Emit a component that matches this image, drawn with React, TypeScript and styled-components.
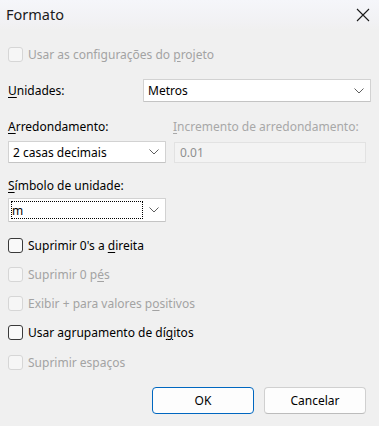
import React from "react";
import styled, { createGlobalStyle } from "styled-components";

const Global = createGlobalStyle`
  html, body { margin: 0; padding: 0; }
  body {
    width: 379px;
    height: 426px;
    overflow: hidden;
    background: #f0f0f0;
    font-family: "Noto Sans", "Open Sans", sans-serif;
    font-size: 12px;
    color: #000;
  }
`;

const Dialog = styled.div`
  width: 379px;
  height: 426px;
  display: flex;
  flex-direction: column;
  background: #f0f0f0;
`;

const TitleBar = styled.div`
  height: 30px;
  display: flex;
  align-items: center;
  justify-content: space-between;
  padding: 0 9px 0 6px;
  background: linear-gradient(#f5f6fa, #f1f1f3 80%, #f0f0f0);
`;

const Title = styled.div`
  font-size: 14.5px;
  color: #1b1b1b;
  margin-top: -2px;
`;

const Body = styled.div`
  display: flex;
  flex-direction: column;
  padding: 14px 8px 0 8px;
`;

const CheckRow = styled.label<{ $disabled?: boolean }>`
  height: 20px;
  display: flex;
  align-items: center;
  gap: 5px;
  color: ${(p) => (p.$disabled ? "#a3a3a3" : "#000")};
`;

const Box = styled.span<{ $disabled?: boolean }>`
  width: 13px;
  height: 13px;
  flex: none;
  border-radius: 3px;
  border: 1px solid ${(p) => (p.$disabled ? "#d6d6d6" : "#3a3a3a")};
  background: ${(p) => (p.$disabled ? "#f6f6f6" : "#f9f9f9")};
`;

const U = styled.span`
  text-decoration: underline;
  text-underline-offset: 2px;
`;

const UnitsRow = styled.div`
  margin-top: 15px;
  display: flex;
  align-items: center;
  justify-content: space-between;
`;

const Combo = styled.div<{ $w: number; $h?: number }>`
  box-sizing: border-box;
  width: ${(p) => p.$w}px;
  height: ${(p) => p.$h ?? 23}px;
  display: flex;
  align-items: center;
  justify-content: space-between;
  padding: 0 6px 0 4px;
  background: #fff;
  border: 1px solid #d2d2d2;
  border-bottom-color: #c4c4c4;
  border-radius: 1px;
`;

const FocusText = styled.div`
  box-sizing: border-box;
  width: 132px;
  height: 18px;
  margin-left: -2px;
  display: flex;
  align-items: center;
  padding-left: 1px;
  outline: 1px dotted #000;
  outline-offset: -1px;
`;

const RoundGrid = styled.div`
  margin-top: 17px;
  display: grid;
  grid-template-columns: 158px 193px;
  column-gap: 7px;
  row-gap: 6px;
  align-items: center;
`;

const Label = styled.div<{ $disabled?: boolean }>`
  height: 16px;
  line-height: 16px;
  white-space: nowrap;
  color: ${(p) => (p.$disabled ? "#a8a8a8" : "#000")};
`;

const Field = styled.div`
  box-sizing: border-box;
  height: 21px;
  margin-left: 1px;
  display: flex;
  align-items: center;
  padding-left: 5px;
  background: #f3f3f3;
  border: 1px solid #e2e2e2;
  color: #8f8f8f;
`;

const SymbolBlock = styled.div`
  margin-top: 15px;
  display: flex;
  flex-direction: column;
  gap: 4px;
`;

const CheckList = styled.div`
  margin-top: 13px;
  display: flex;
  flex-direction: column;
  gap: 9.25px;
`;

const Buttons = styled.div`
  margin-top: 15px;
  margin-right: 5px;
  display: flex;
  justify-content: flex-end;
  gap: 10px;
`;

const Button = styled.button<{ $primary?: boolean }>`
  box-sizing: border-box;
  width: 102px;
  height: 27px;
  font-family: inherit;
  font-size: 12px;
  color: #000;
  background: #fdfdfd;
  border-radius: 4px;
  border: 1px solid ${(p) => (p.$primary ? "#0067c0" : "#d0d0d0")};
  border-bottom-color: ${(p) => (p.$primary ? "#0067c0" : "#bcbcbc")};
  padding: 0;
`;

const Chevron = () => (
  <svg width="10" height="6" viewBox="0 0 10 6" fill="none">
    <path d="M0.5 0.5 L5 5 L9.5 0.5" stroke="#5f5f5f" strokeWidth="1" />
  </svg>
);

const Close = () => (
  <svg width="14" height="14" viewBox="0 0 14 14" fill="none">
    <path d="M1 1 L13 13 M13 1 L1 13" stroke="#1a1a1a" strokeWidth="1.1" />
  </svg>
);

const Check = ({ disabled, children }: { disabled?: boolean; children: React.ReactNode }) => (
  <CheckRow $disabled={disabled}>
    <Box $disabled={disabled} />
    <span>{children}</span>
  </CheckRow>
);

export default function App() {
  return (
    <Dialog>
      <Global />
      <TitleBar>
        <Title>Formato</Title>
        <Close />
      </TitleBar>
      <Body>
        <Check disabled>
          Usar as configurações do <U>p</U>rojeto
        </Check>
        <UnitsRow>
          <Label>
            <U>U</U>nidades:
          </Label>
          <Combo $w={228}>
            <span>Metros</span>
            <Chevron />
          </Combo>
        </UnitsRow>
        <RoundGrid>
          <Label>
            <U>A</U>rredondamento:
          </Label>
          <Label $disabled>
            <U>I</U>ncremento de arredondamento:
          </Label>
          <Combo $w={158} $h={22}>
            <span>2 casas decimais</span>
            <Chevron />
          </Combo>
          <Field>0.01</Field>
        </RoundGrid>
        <SymbolBlock>
          <Label>
            <U>S</U>ímbolo de unidade:
          </Label>
          <Combo $w={158} $h={24}>
            <FocusText>m</FocusText>
            <Chevron />
          </Combo>
        </SymbolBlock>
        <CheckList>
          <Check>
            Suprimir 0's a <U>d</U>ireita
          </Check>
          <Check disabled>
            Suprimir 0 p<U>é</U>s
          </Check>
          <Check disabled>
            Exibir + para valores p<U>o</U>sitivos
          </Check>
          <Check>
            Usar agrupamento de dí<U>g</U>itos
          </Check>
          <Check disabled>Suprimir espaços</Check>
        </CheckList>
        <Buttons>
          <Button $primary>OK</Button>
          <Button>Cancelar</Button>
        </Buttons>
      </Body>
    </Dialog>
  );
}
